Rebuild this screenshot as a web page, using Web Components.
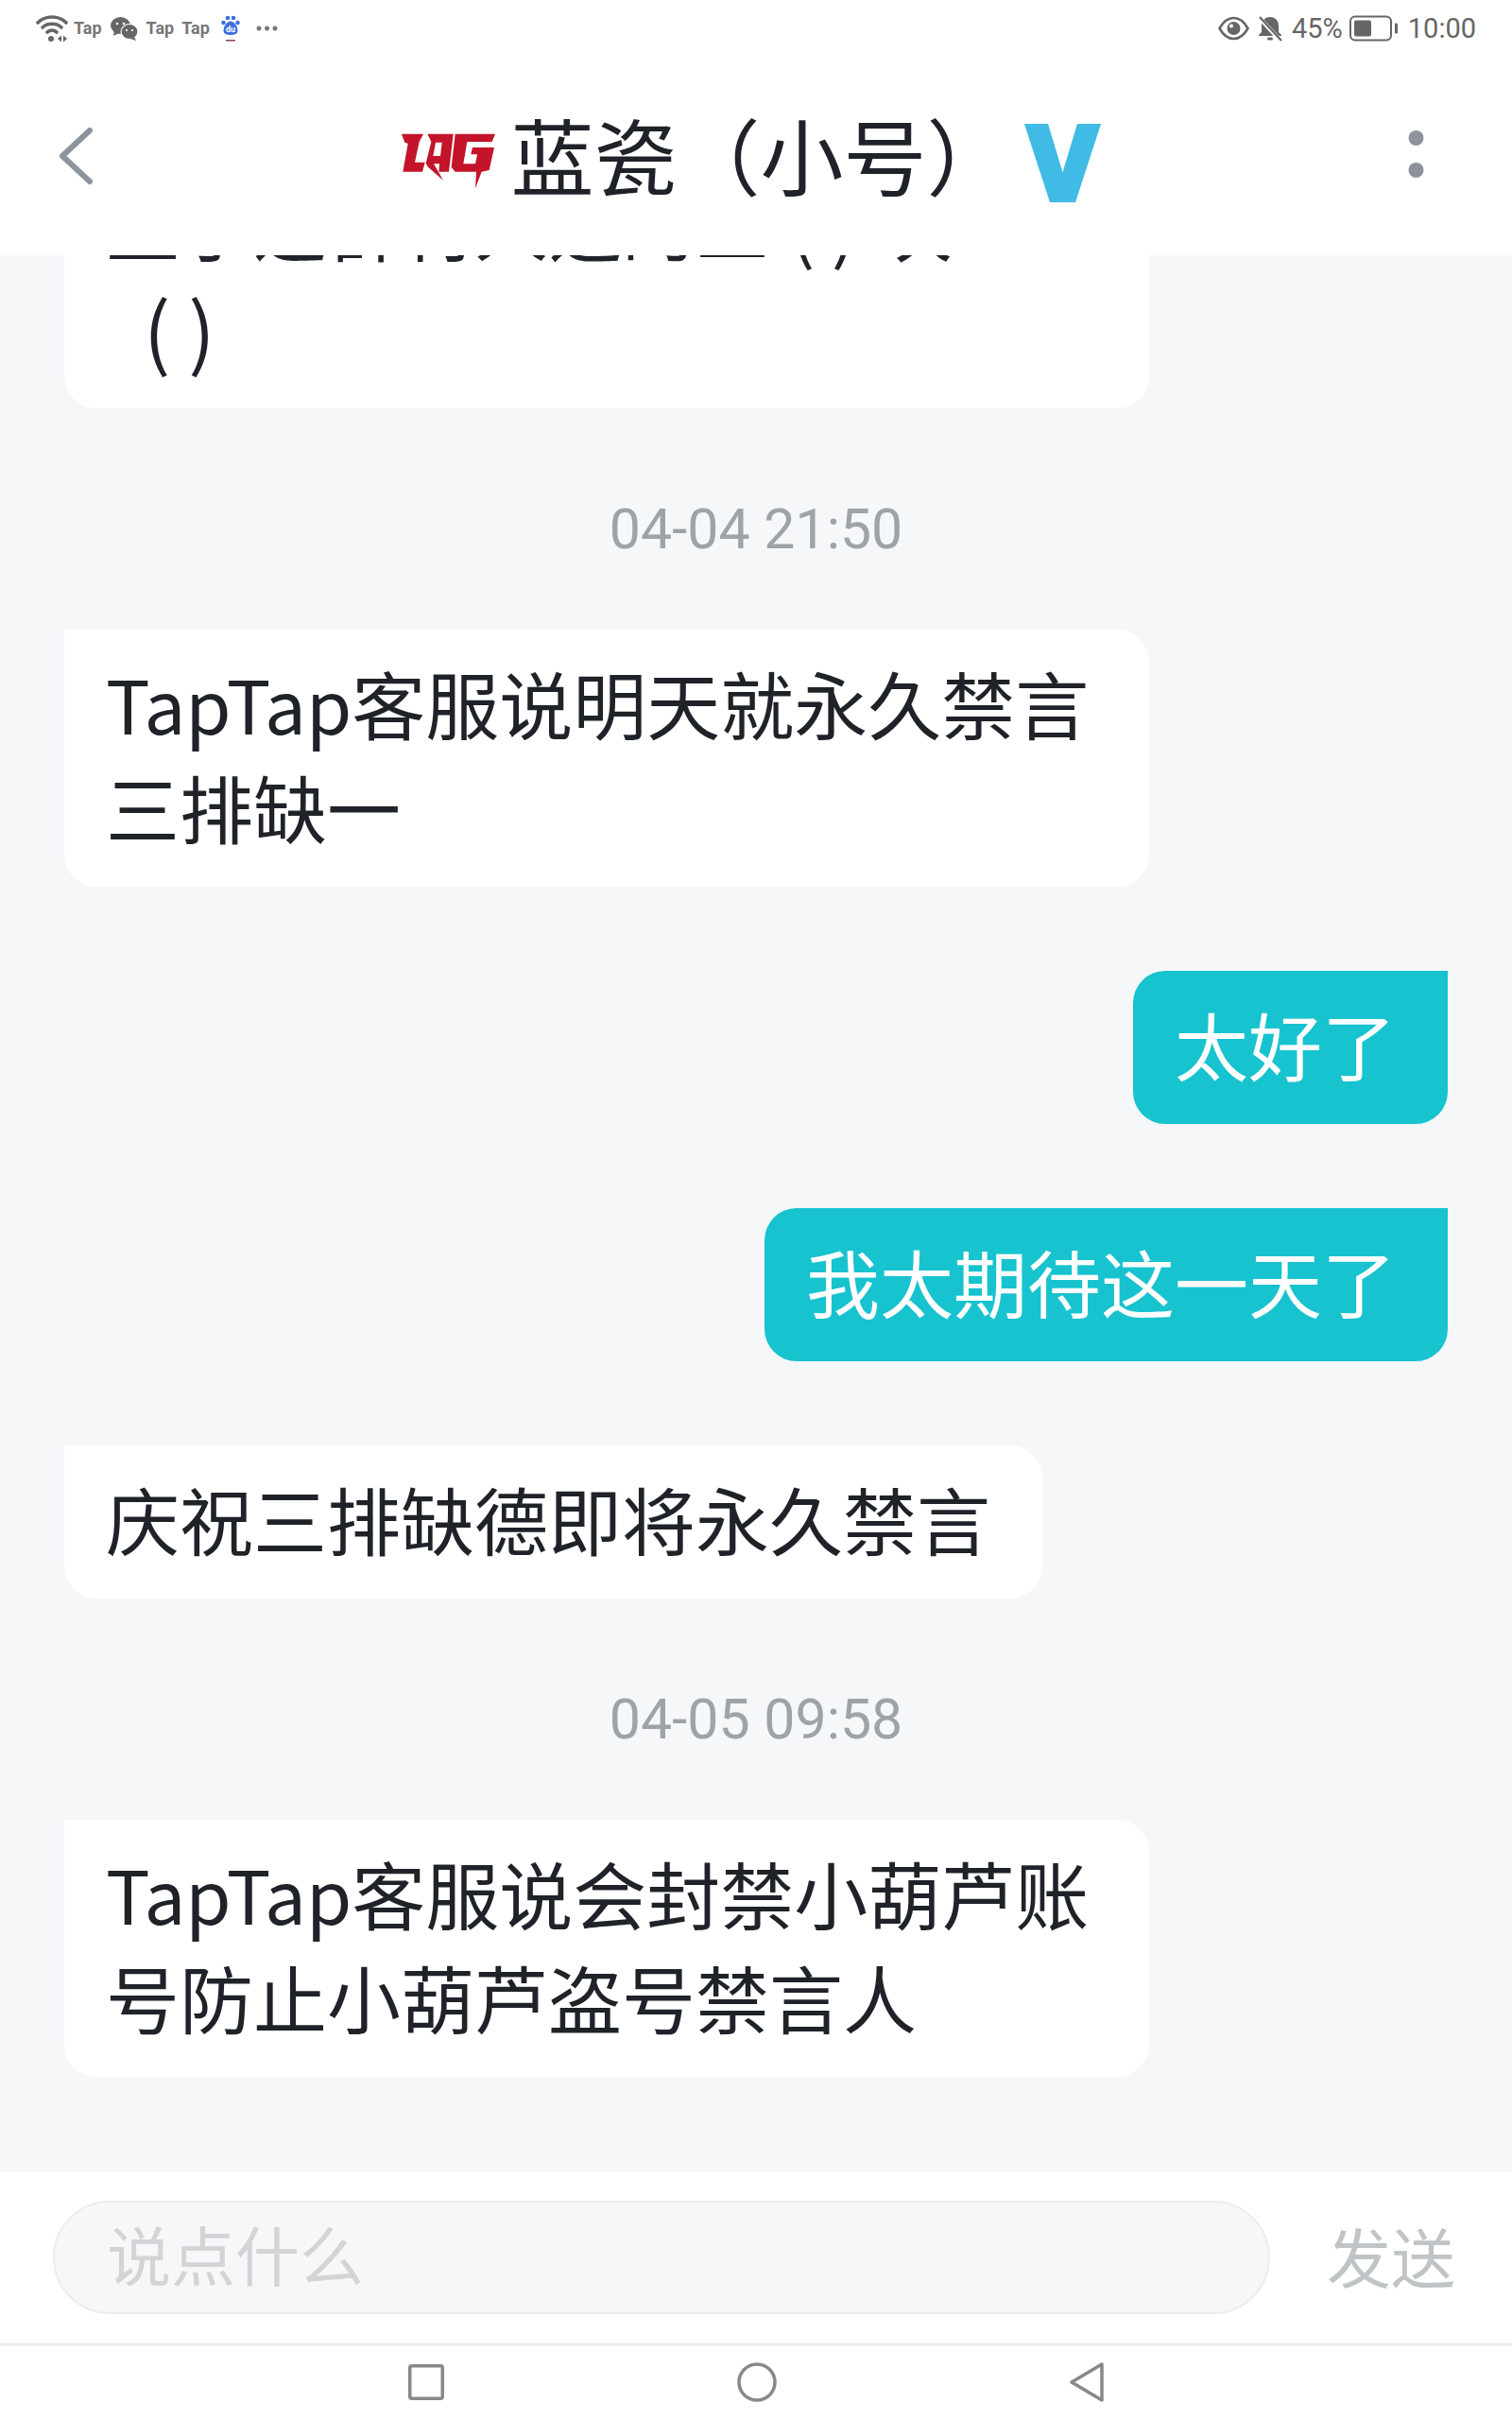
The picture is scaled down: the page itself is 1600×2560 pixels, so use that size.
<!DOCTYPE html>
<html lang="zh">
<head>
<meta charset="utf-8">
<title>chat</title>
<style>
  html, body { margin: 0; padding: 0; background: #fff; }
  body { font-family: "Noto Sans CJK SC", "Noto Sans", sans-serif; }
</style>
</head>
<body>
<chat-app>
  <status-bar slot="status"></status-bar>
  <chat-header slot="header" name="蓝瓷（小号）"></chat-header>
  <chat-bubble side="left" style="margin-top:-110px;width:1148px"><div style="white-space:nowrap">至于这群村人选的三<span style="margin:0 24px 0 22px">( )</span>次</div><div style="padding-left:40px;font-size:84px">( )</div></chat-bubble>
  <chat-time>04-04 21:50</chat-time>
  <chat-bubble side="left">TapTap客服说明天就永久禁言三排缺一</chat-bubble>
  <chat-bubble side="right">太好了</chat-bubble>
  <chat-bubble side="right">我太期待这一天了</chat-bubble>
  <chat-bubble side="left">庆祝三排缺德即将永久禁言</chat-bubble>
  <chat-time>04-05 09:58</chat-time>
  <chat-bubble side="left">TapTap客服说会封禁小葫芦账号防止小葫芦盗号禁言人</chat-bubble>
  <chat-composer slot="composer"></chat-composer>
  <nav-bar slot="nav"></nav-bar>
</chat-app>
<script>
class ChatApp extends HTMLElement {
  constructor() {
    super();
    this.attachShadow({ mode: 'open' });
    this.shadowRoot.innerHTML = `
      <style>
        :host { display: flex; flex-direction: column; width: 1600px; height: 2560px; overflow: hidden; background: #fff; }
        .top { flex: none; background: #fff; position: relative; z-index: 1; }
        .list { flex: 1; min-height: 0; overflow: hidden; background: #f6f7f9; display: flex; flex-direction: column; gap: 89px; padding: 0 68px; }
      </style>
      <div class="top"><slot name="status"></slot><slot name="header"></slot></div>
      <div class="list"><slot></slot></div>
      <slot name="composer"></slot>
      <slot name="nav"></slot>`;
  }
}

class StatusBar extends HTMLElement {
  constructor() {
    super();
    this.attachShadow({ mode: 'open' });
    this.shadowRoot.innerHTML = `
      <style>
        :host { display: flex; align-items: center; justify-content: space-between; height: 60px; padding: 0 38px 0 38px; color: #666; font-family: Roboto, sans-serif; }
        .l, .r { display: flex; align-items: center; }
        .tap { font-size: 18px; font-weight: 700; color: #777; line-height: 22px; }
        .r span { font-size: 29px; line-height: 32px; }
        svg { display: block; flex: none; }
      </style>
      <div class="l">
        <svg width="34" height="30" viewBox="0 0 34 30" fill="none" stroke="#666" stroke-width="3.600" stroke-linecap="round">
          <path d="M2 9C10 1 24 1 32 9"/><path d="M7 14C12 9 22 9 27 14"/><path d="M12 19C15 16.500 19 16.500 22 19"/>
          <circle cx="16" cy="26" r="3" fill="#666" stroke="none"/>
          <path d="M27 22.500l-4 3.500 4 3.500z" fill="#666" stroke="none"/><path d="M29 22.500l4 3.500-4 3.500z" fill="#666" stroke="none"/>
        </svg>
        <span class="tap" style="margin-left:6px">Tap</span>
        <svg style="margin-left:9px" width="29" height="25" viewBox="0 0 29 25">
          <ellipse cx="10.500" cy="9" rx="10.500" ry="9" fill="#666"/><path d="M4 14l-1 6 6-3z" fill="#666"/>
          <ellipse cx="20" cy="15.500" rx="9" ry="8" fill="#666" stroke="#fff" stroke-width="1.200"/><path d="M25 21l2 4-6-2z" fill="#666"/>
          <circle cx="7" cy="7" r="1.300" fill="#fff"/><circle cx="14" cy="7" r="1.300" fill="#fff"/>
          <circle cx="17" cy="14" r="1.100" fill="#fff"/><circle cx="23" cy="14" r="1.100" fill="#fff"/>
        </svg>
        <span class="tap" style="margin-left:9px">Tap</span>
        <span class="tap" style="margin-left:8px">Tap</span>
        <svg style="margin-left:12px" width="20" height="28" viewBox="0 0 20 28">
          <circle cx="2.500" cy="8" r="2.300" fill="#3f6fe0"/><circle cx="7" cy="3" r="2.300" fill="#3f6fe0"/><circle cx="13" cy="3" r="2.300" fill="#3f6fe0"/><circle cx="17.500" cy="8" r="2.300" fill="#3f6fe0"/>
          <path d="M10 6.500C6 6.500 2.500 12 2.500 16.500 2.500 20 6 21 10 21s7.500-1 7.500-4.500C17.500 12 14 6.500 10 6.500z" fill="#3f6fe0"/>
          <rect x="5" y="26" width="10" height="1.500" fill="#8a4060"/>
          <text x="10" y="18" font-family="Roboto, sans-serif" font-size="9" font-weight="700" fill="#fff" text-anchor="middle">du</text>
        </svg>
        <svg style="margin-left:17px" width="23" height="6" viewBox="0 0 23 6"><circle cx="3" cy="3" r="2.500" fill="#777"/><circle cx="11.500" cy="3" r="2.500" fill="#777"/><circle cx="20" cy="3" r="2.500" fill="#777"/></svg>
      </div>
      <div class="r">
        <svg width="33" height="26" viewBox="0 0 33 26" fill="none">
          <path d="M1.500 13C6 5 12 2 16.500 2S27 5 31.500 13C27 21 21 24 16.500 24S6 21 1.500 13z" stroke="#666" stroke-width="2.600"/>
          <circle cx="16.500" cy="13" r="7" fill="#666"/><circle cx="14" cy="10.500" r="2" fill="#fff"/>
        </svg>
        <svg style="margin-left:9px" width="26" height="28" viewBox="0 0 26 28">
          <path d="M13 2c-5.500 0-9 4-9 9v7l-3 3v1h24v-1l-3-3v-7c0-5-3.500-9-9-9z" fill="#666"/><rect x="10" y="23.500" width="6" height="3" rx="1.500" fill="#666"/>
          <path d="M0 1l24 26" stroke="#fff" stroke-width="4.500"/><path d="M2 2l23 25" stroke="#666" stroke-width="2.200"/>
        </svg>
        <span style="margin-left:10px">45%</span>
        <svg style="margin-left:7px" width="52" height="28" viewBox="0 0 52 28">
          <rect x="1" y="1.500" width="43" height="25" rx="5" fill="none" stroke="#666" stroke-width="2"/>
          <rect x="5" y="5.500" width="18" height="17" rx="2" fill="#666"/>
          <rect x="48" y="8.500" width="3" height="11" rx="1.200" fill="#666"/>
        </svg>
        <span style="margin-left:10px">10:00</span>
      </div>`;
  }
}

class ChatHeader extends HTMLElement {
  constructor() {
    super();
    this.attachShadow({ mode: 'open' });
    this.shadowRoot.innerHTML = `
      <style>
        :host { display: flex; align-items: center; height: 210px; padding: 0 93px 0 62px; }
        .mid { flex: 1; display: flex; align-items: center; justify-content: center; }
        .name { font-size: 88px; line-height: 100px; color: #1f2329; white-space: nowrap; margin: -6px 0 0 15px; }
        svg { display: block; flex: none; }
      </style>
      <svg width="38" height="62" viewBox="0 0 38 62" fill="none" stroke="#8c949c" stroke-width="6" stroke-linecap="round" stroke-linejoin="round"><path d="M33 4L4 31l29 27"/></svg>
      <div class="mid">
        <svg style="margin-top:10px" width="101" height="60" viewBox="25 30 303 180" fill="#c3142a">
          <path d="M28 35H97L84 60 70 125h32l-8 30H32L48 65 38 62z"/>
          <path d="M110 35H192L178 155H146L148 130H130L160 182 112 140 105 128 122 60zM136 62L128 105H151L156 62z" fill-rule="evenodd"/>
          <path d="M198 35H325L315 60H236L224 130H262L268 100H248L253 78H322L306 150 282 155 262 208 265 155H198L186 140z"/>
        </svg>
        <div class="name">${this.getAttribute('name')}</div>
        <svg style="margin:14px 0 0 14px" width="83" height="85" viewBox="0 0 84 88" fill="#3fbbe6"><path d="M0 1h26l16 53L58 1h26L56 87H28z"/></svg>
      </div>
      <svg style="margin-top:-5px" width="17" height="50" viewBox="0 0 17 50" fill="#8e9299"><ellipse cx="8.500" cy="8" rx="8" ry="8"/><ellipse cx="8.500" cy="42" rx="8" ry="8"/></svg>`;
  }
}

class ChatBubble extends HTMLElement {
  constructor() {
    super();
    this.attachShadow({ mode: 'open' });
    this.shadowRoot.innerHTML = `
      <style>
        :host { display: block; flex: none; box-sizing: border-box; max-width: 1148px; padding: 22px 55px 30px 44px; font-size: 78px; line-height: 110px; color: #1f2329; background: #fff; border-radius: 0 34px 34px 34px; align-self: flex-start; }
        :host([side="right"]) { align-self: flex-end; background: #17c3cf; color: #fff; border-radius: 34px 0 34px 34px; }
      </style>
      <slot></slot>`;
  }
}

class ChatTime extends HTMLElement {
  constructor() {
    super();
    this.attachShadow({ mode: 'open' });
    this.shadowRoot.innerHTML = `
      <style>
        :host { display: block; flex: none; text-align: center; font-family: Roboto, sans-serif; font-size: 59px; line-height: 68px; color: #9ea3a8; margin: 5px 0 -17px; }
      </style>
      <slot></slot>`;
  }
}

class ChatComposer extends HTMLElement {
  constructor() {
    super();
    this.attachShadow({ mode: 'open' });
    this.shadowRoot.innerHTML = `
      <style>
        :host { display: flex; flex: none; align-items: center; box-sizing: border-box; height: 185px; padding: 0 60px 0 56px; background: #fff; border-bottom: 4px solid #eeeff0; }
        .pill { box-sizing: border-box; width: 1288px; height: 120px; border-radius: 60px; background: #f6f7f9; border: 2px solid #ededed; display: flex; align-items: center; padding: 0 55px 8px; font-size: 68px; color: #d2d4d6; }
        .send { margin-left: auto; font-size: 68px; color: #c0c4c6; line-height: 120px; padding-bottom: 4px; }
      </style>
      <div class="pill">说点什么</div>
      <div class="send">发送</div>`;
  }
}

class NavBar extends HTMLElement {
  constructor() {
    super();
    this.attachShadow({ mode: 'open' });
    this.shadowRoot.innerHTML = `
      <style>
        :host { display: flex; flex: none; align-items: center; justify-content: center; box-sizing: border-box; height: 78px; padding-bottom: 3px; background: #fff; gap: 310px; }
        svg { display: block; }
      </style>
      <svg width="38" height="38" viewBox="0 0 38 38" fill="none" stroke="#888" stroke-width="3.500"><rect x="1.750" y="1.750" width="34.500" height="34.500" rx="2"/></svg>
      <svg width="42" height="42" viewBox="0 0 42 42" fill="none" stroke="#888" stroke-width="3.500"><circle cx="21" cy="21" r="19"/></svg>
      <svg width="36" height="42" viewBox="0 0 36 42" fill="none" stroke="#888" stroke-width="3.500" stroke-linejoin="round"><path d="M34 2v38L2 21z"/></svg>`;
  }
}

customElements.define('chat-app', ChatApp);
customElements.define('status-bar', StatusBar);
customElements.define('chat-header', ChatHeader);
customElements.define('chat-bubble', ChatBubble);
customElements.define('chat-time', ChatTime);
customElements.define('chat-composer', ChatComposer);
customElements.define('nav-bar', NavBar);
</script>
</body>
</html>
